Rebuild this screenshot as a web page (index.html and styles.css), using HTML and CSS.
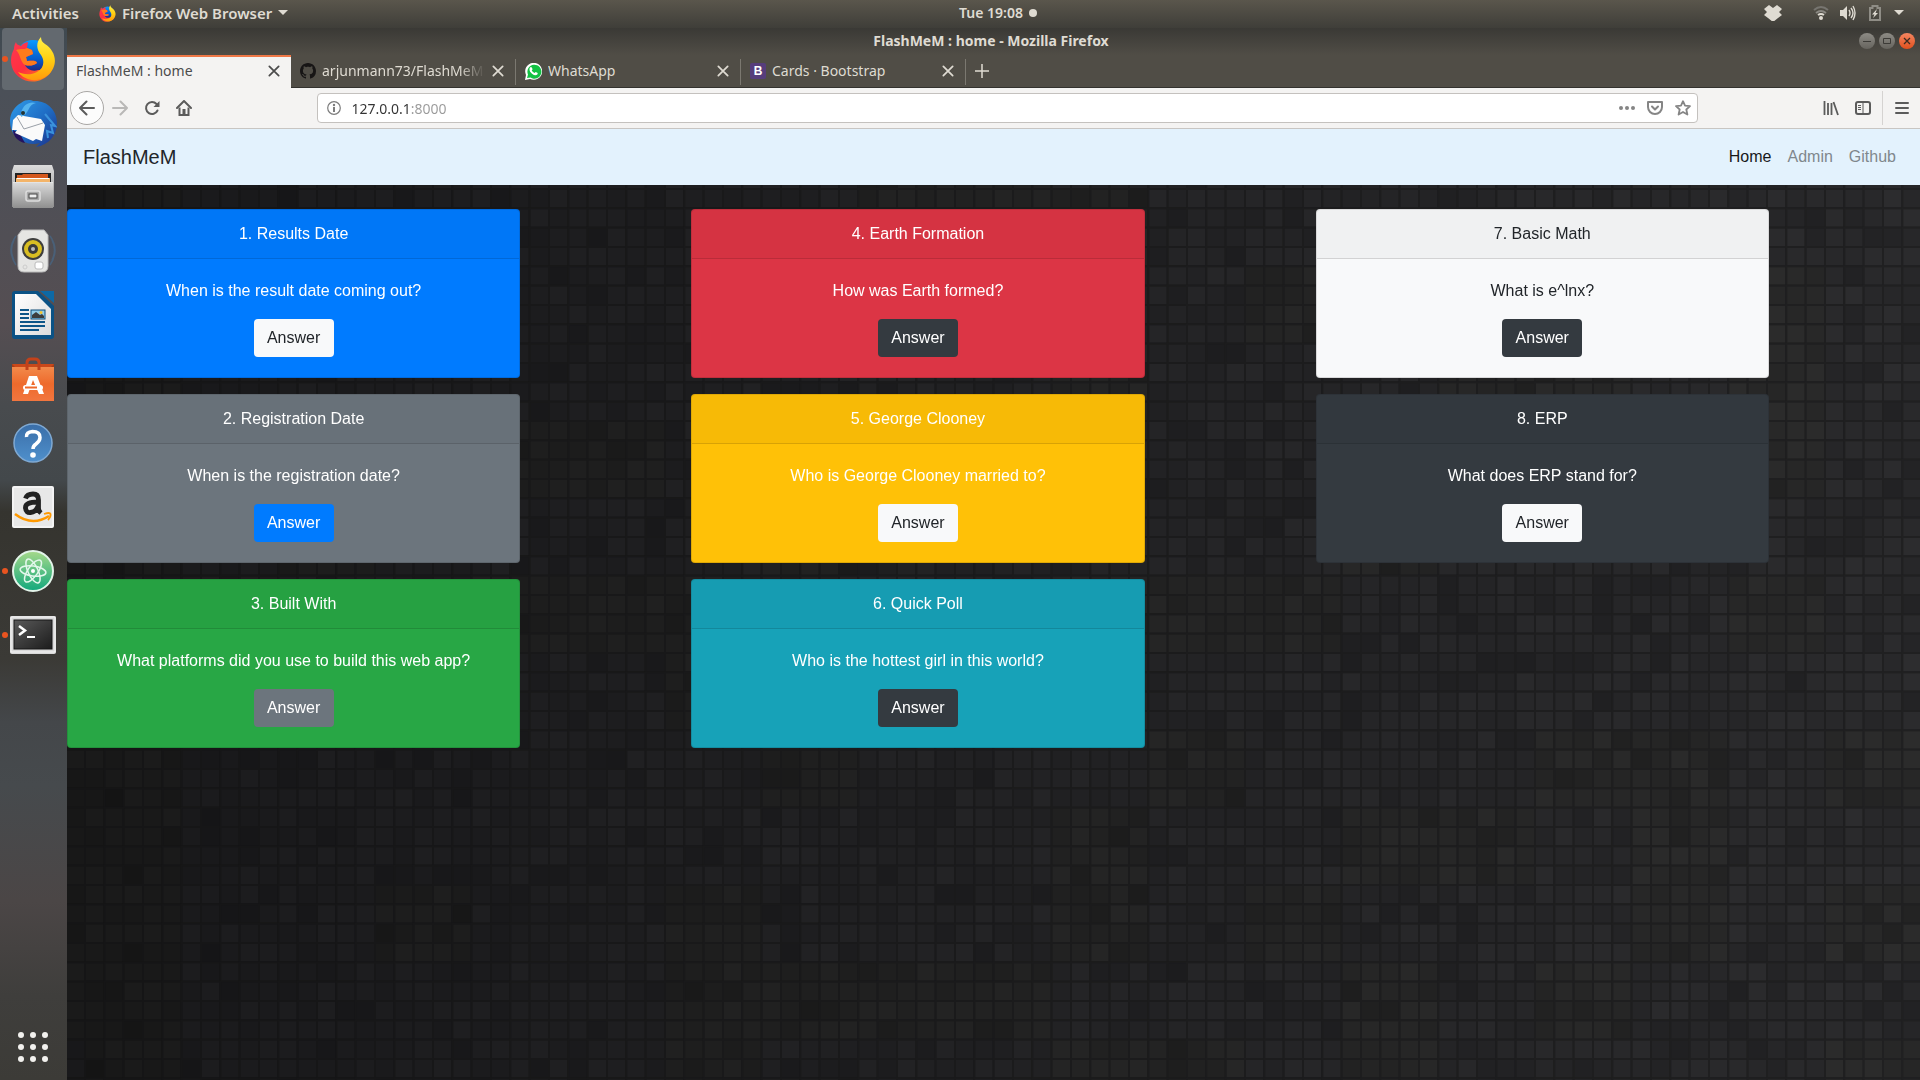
FILE: index.html
```html
<!DOCTYPE html>
<html lang="en">
<head>
<meta charset="utf-8">
<meta name="viewport" content="width=device-width, initial-scale=1">
<title>FlashMeM : home</title>
<link rel="stylesheet" href="styles.css">
</head>
<body>
<svg class="defs" aria-hidden="true">
  <defs>
    <linearGradient id="foxBody" x1="0.8" y1="0" x2="0.2" y2="1"><stop offset="0" stop-color="#ffd029"/><stop offset=".4" stop-color="#ff8a16"/><stop offset=".75" stop-color="#ff3647"/><stop offset="1" stop-color="#d3108a"/></linearGradient>
    <linearGradient id="foxLeft" x1="0" y1="0" x2="1" y2="1"><stop offset="0" stop-color="#ff3850"/><stop offset=".5" stop-color="#ff2f3f"/><stop offset="1" stop-color="#ff9a10"/></linearGradient>
    <linearGradient id="foxTail" x1="0" y1="0" x2="0" y2="1"><stop offset="0" stop-color="#fff14a"/><stop offset=".5" stop-color="#ffd012"/><stop offset="1" stop-color="#ff9a0c"/></linearGradient>
    <linearGradient id="globe" x1="0" y1="0" x2="0" y2="1"><stop offset="0" stop-color="#0a9bff"/><stop offset=".6" stop-color="#0558c8"/><stop offset="1" stop-color="#2b1a6e"/></linearGradient>
    <linearGradient id="bird" x1="0" y1="0" x2="1" y2="1"><stop offset="0" stop-color="#2f9be8"/><stop offset=".5" stop-color="#1f6ec6"/><stop offset="1" stop-color="#1b2e86"/></linearGradient>
    <linearGradient id="metal" x1="0" y1="0" x2="0" y2="1"><stop offset="0" stop-color="#dcdcdc"/><stop offset="1" stop-color="#8f8f8f"/></linearGradient>
    <linearGradient id="paper" x1="0" y1="0" x2="1" y2="1"><stop offset="0" stop-color="#fff"/><stop offset="1" stop-color="#dcdcdc"/></linearGradient>
    <linearGradient id="bag" x1="0" y1="0" x2="0" y2="1"><stop offset="0" stop-color="#f28a4b"/><stop offset=".5" stop-color="#ee6a2c"/><stop offset="1" stop-color="#f2763f"/></linearGradient>
    <linearGradient id="helpBlue" x1="0" y1="0" x2="0" y2="1"><stop offset="0" stop-color="#3a6ea8"/><stop offset="1" stop-color="#4f90cc"/></linearGradient>
    <linearGradient id="atom" x1="0" y1="0" x2="0" y2="1"><stop offset="0" stop-color="#a6d98a"/><stop offset="1" stop-color="#12a87c"/></linearGradient>
    <linearGradient id="screen" x1="0" y1="0" x2="1" y2="1"><stop offset="0" stop-color="#5a5a5a"/><stop offset="1" stop-color="#1c1c1c"/></linearGradient>
    <symbol id="firefox" viewBox="0 0 46 46">
      <circle cx="23" cy="21" r="17" fill="url(#globe)"/>
      <path d="M6 6C4 9 4 12 4 13C-1 22 0 34 9 41C19 49 34 46 41 36C43 32 40 27 36 30C33 34 31 34 28 34C22 36 17 33 15 29C19 30 23 30 27 27C26 24 22 25 17 25L16 21L23 18L22 14L17 12L18 6C14 7 12 8 11 10C8 9 6 8 6 6Z" fill="url(#foxLeft)"/>
      <path d="M6 14C11 12 14 14 17 12L22 14L23 18L16 21L17 25C22 25 26 24 27 27C23 30 19 30 15 29C10 26 11 19 6 14Z" fill="#ff7b1c"/>
      <path d="M31 1C26 6 26 13 31 19C35 25 34 32 27 36C20 40 12 38 8 36C14 44 27 48 38 39C49 29 46 15 35 8C32 6 31 4 31 1Z" fill="url(#foxTail)"/>
    </symbol>
    <symbol id="close" viewBox="0 0 12 12"><path d="M2 2l8 8M10 2l-8 8" fill="none" stroke="currentColor" stroke-width="1.5" stroke-linecap="round"/></symbol>
  </defs>
</svg>

<header class="topbar">
  <div class="topbar-left">
    <button class="shell-item" type="button">Activities</button>
    <button class="shell-item app-menu" type="button">
      <svg width="17" height="17" aria-hidden="true"><use href="#firefox"/></svg>
      Firefox Web Browser
      <svg width="10" height="6" aria-hidden="true"><path d="M0 0h10L5 5z" fill="currentColor"/></svg>
    </button>
  </div>
  <button class="shell-item clock" type="button">Tue 19:08 <span class="clock-dot"></span></button>
  <div class="topbar-right">
    <svg class="dropbox" width="18" height="16" viewBox="0 0 18 16" aria-label="Dropbox" role="img"><path d="M5 0l4 3 4-3 5 4-3 3 3 3-4 3-5 4-5-4-4-3 3-3-3-3z" fill="#dfdbd2"/></svg>
    <svg width="16" height="16" viewBox="0 0 16 16" aria-label="Wi-Fi" role="img"><g fill="none" stroke-width="2"><path d="M1 5q7-6 14 0" stroke="#777570"/><path d="M3 8q5-4 10 0" stroke="#8b8983"/><path d="M5 10q3-2 6 0" stroke="#dfdbd2"/></g><circle cx="8" cy="13" r="2" fill="#dfdbd2"/></svg>
    <svg width="16" height="16" viewBox="0 0 16 16" aria-label="Volume" role="img"><path d="M0 5h3l4-4v14l-4-4H0z" fill="#dfdbd2"/><path d="M9 5q2 3 0 6M11 3q4 5 0 10M13 1q4 7 0 14" fill="none" stroke="#dfdbd2" stroke-width="1.4"/></svg>
    <svg class="battery" width="12" height="16" viewBox="0 0 12 16" aria-label="Battery" role="img"><path d="M1 3h2.500V1h5v2H11v12H1z" fill="none" stroke="#8f8d86" stroke-width="2"/><path d="M8 4L3 9.500h2.500L4 13l5-5H6.500z" fill="#dfdbd2"/></svg>
    <svg width="10" height="6" aria-hidden="true"><path d="M0 0h10L5 5z" fill="#dfdbd2"/></svg>
  </div>
</header>

<div class="desktop">
  <nav class="dock" aria-label="Dock">
    <button class="dock-item active running" type="button" aria-label="Firefox"><svg width="46" height="46"><use href="#firefox"/></svg></button>
    <button class="dock-item" type="button" aria-label="Thunderbird">
      <svg width="48" height="48" viewBox="0 0 48 48"><path d="M12 4C17 0 22 1 24 2C38 1 48 11 48 24C48 36 40 46 27 48L31 44C25 46 18 45 14 42C8 40 1 34 1 22C1 14 6 7 12 4Z" fill="url(#bird)"/><path d="M4 31C4 38 10 43 16 44L11 35Z" fill="#24135e"/><path d="M4 21L9 16L32 20L36 26L33 42L27 40L24 42L15 38L6 34L8 31L3 31Z" fill="#fafafa"/><path d="M8 18L15 30L34 24" fill="none" stroke="#9aa0a8"/><path d="M12 14C14 5 21 2 27 4C18 6 21 15 12 18Z" fill="#54b3ef"/><circle cx="14" cy="14" r="2" fill="#233"/><path d="M36 15L46 27L42 26L44 34L38 32L39 39" fill="none" stroke="#3a92dc" stroke-width="2"/></svg>
    </button>
    <button class="dock-item" type="button" aria-label="Files">
      <svg width="44" height="46" viewBox="0 0 44 46"><path d="M3 1h38l2 6v36H1V7z" fill="url(#metal)"/><path d="M4 9h36v10H4z" fill="#222"/><path d="M6 11h5l1-1h25v9H6z" fill="#d4581d"/><path d="M5 14h34v5H5z" fill="#f3b469"/><path d="M6 14.500h32" stroke="#fff"/><path d="M2 18h40v26H2z" fill="url(#metal)"/><path d="M2 18.500h40" stroke="#e4e4e4"/><rect x="15" y="27" width="14" height="10" rx="2" fill="#aaa" stroke="#ddd" stroke-width="1.500"/><rect x="18" y="30" width="8" height="4" fill="#eee" stroke="#444"/></svg>
    </button>
    <button class="dock-item" type="button" aria-label="Rhythmbox">
      <svg width="48" height="46" viewBox="0 0 48 46"><path d="M7 8Q-3 22 7 37M5 12q-5 10 0 20M41 8q10 14 0 29M43 12q5 10 0 20" fill="none" stroke="#4a6078" stroke-width="1.500"/><path d="M13 2h22l4 5v31q0 6-6 6H15q-6 0-6-6V7z" fill="#e5e5e3" stroke="#bbb"/><circle cx="24" cy="21" r="11" fill="#3d3d3d"/><circle cx="24" cy="21" r="9" fill="#d8bd22"/><circle cx="24" cy="21" r="5" fill="#3a3a3a"/><circle cx="24" cy="21" r="2" fill="#bbb"/><rect x="26" y="34" width="8" height="7" rx="2" fill="#fff" stroke="#bbb"/><circle cx="16" cy="39" r="2" fill="none" stroke="#ccc"/></svg>
    </button>
    <button class="dock-item" type="button" aria-label="LibreOffice Writer">
      <svg width="42" height="48" viewBox="0 0 42 48"><path d="M3 0h23l16 15v30q0 3-3 3H3q-3 0-3-3V3q0-3 3-3z" fill="#0b5285"/><path d="M28 0h14v12z" fill="#0d69a5"/><path d="M3 3h21l15 15v26H3z" fill="url(#paper)"/><path d="M8 19h9M8 23h9M8 27h9M8 31h25M8 35h25M8 39h19" stroke="#0e5688" stroke-width="2"/><rect x="19" y="19" width="14" height="9" fill="#8fcbe8" stroke="#0e4d78"/><path d="M20 27v-3l4-3 4 3 2-1 2 2v2z" fill="#3c3c3c"/><circle cx="29" cy="21.500" r="1.500" fill="#f4c430"/></svg>
    </button>
    <button class="dock-item" type="button" aria-label="Ubuntu Software">
      <svg width="44" height="44" viewBox="0 0 44 44"><path d="M1 7h42l-1 4H2z" fill="#c9481a"/><path d="M1 7v4h42V7l-3 3H4z" fill="#a93c15"/><path d="M1 10h42v34H1z" fill="url(#bag)"/><path d="M16 13V6q0-4 4-4h4q4 0 4 4v7" fill="none" stroke="#c2421b" stroke-width="3"/><path d="M18 19h8l7 18h-5l-6-14-5 14h-5z" fill="#fff"/><rect x="12" y="28" width="20" height="5" rx="2.500" fill="#fff"/><path d="M14 30.500h12" stroke="#ee6a2c" stroke-width="2"/></svg>
    </button>
    <button class="dock-item" type="button" aria-label="Help">
      <svg width="42" height="42" viewBox="0 0 42 42"><circle cx="21" cy="21" r="19" fill="url(#helpBlue)" stroke="#7fa9d3" stroke-width="1.500"/><path d="M14.500 15Q14 10 20.500 9.500Q28 9.500 28 15.500Q28 19 24 22Q21 24 21 27" fill="none" stroke="#fff" stroke-width="3.500"/><circle cx="21" cy="33" r="2.800" fill="#fff"/></svg>
    </button>
    <button class="dock-item" type="button" aria-label="Amazon">
      <svg width="42" height="42" viewBox="0 0 42 42"><rect width="42" height="42" rx="2" fill="#e8e8e8"/><rect x="1" y="1" width="40" height="40" rx="1" fill="none" stroke="#fff"/><path d="M13.500 12.500Q15 8 21 8Q26.500 8 26.500 14V22Q26.500 25 29 27M26 16Q13 16 13.500 22Q14 27 18.500 26.500Q24 26 26 20" fill="none" stroke="#222" stroke-width="4.800"/><path d="M3 28Q20 41 37 30" fill="none" stroke="#f90" stroke-width="2.500"/><path d="M32 28Q38 26 38.500 28Q39 31 36 34" fill="none" stroke="#f90" stroke-width="1.800"/></svg>
    </button>
    <button class="dock-item running" type="button" aria-label="Atom">
      <svg width="42" height="42" viewBox="0 0 42 42"><circle cx="21" cy="21" r="20" fill="url(#atom)" stroke="#e3f4ea" stroke-width="2"/><g fill="none" stroke="#e3f7ec" stroke-width="1.500"><ellipse cx="21" cy="21" rx="13" ry="5" transform="rotate(8 21 21)"/><ellipse cx="21" cy="21" rx="13" ry="5" transform="rotate(65 21 21)"/><ellipse cx="21" cy="21" rx="13" ry="5" transform="rotate(125 21 21)"/></g><circle cx="21" cy="21" r="2" fill="#fff"/></svg>
    </button>
    <button class="dock-item running" type="button" aria-label="Terminal">
      <svg width="46" height="38" viewBox="0 0 46 38"><rect width="46" height="38" rx="2" fill="#d9d9d9"/><rect x="1" y="1" width="44" height="35" fill="none" stroke="#f4f4f4"/><rect x="4" y="4" width="38" height="29" fill="url(#screen)" stroke="#161616"/><path d="M9 10l6 4.500L9 19" fill="none" stroke="#fff" stroke-width="2.500"/><path d="M17 21h8" stroke="#fff" stroke-width="2"/></svg>
    </button>
    <button class="dock-item apps" type="button" aria-label="Show applications">
      <svg width="30" height="30" viewBox="0 0 30 30" fill="#f2f1ee"><circle cx="3" cy="3" r="3"/><circle cx="15" cy="3" r="3"/><circle cx="27" cy="3" r="3"/><circle cx="3" cy="15" r="3"/><circle cx="15" cy="15" r="3"/><circle cx="27" cy="15" r="3"/><circle cx="3" cy="27" r="3"/><circle cx="15" cy="27" r="3"/><circle cx="27" cy="27" r="3"/></svg>
    </button>
  </nav>

  <div class="window">
    <div class="titlebar">
      <span class="window-title">FlashMeM : home - Mozilla Firefox</span>
      <div class="window-controls">
        <button class="wc" type="button" aria-label="Minimize"><svg width="16" height="16"><path d="M4 8.500h8" stroke="#3c3b37"/></svg></button>
        <button class="wc" type="button" aria-label="Maximize"><svg width="16" height="16"><path d="M4.500 5.500h7v5h-7z" fill="none" stroke="#3c3b37"/></svg></button>
        <button class="wc wc-close" type="button" aria-label="Close"><svg width="16" height="16"><path d="M5 5l6 6M11 5l-6 6" stroke="#3c2b20" stroke-width="1.300"/></svg></button>
      </div>
    </div>

    <div class="tabs">
      <div class="tab selected">
        <span class="tab-label">FlashMeM : home</span>
        <button class="icon-btn" type="button" aria-label="Close tab"><svg width="14" height="14"><use href="#close"/></svg></button>
      </div>
      <div class="tab">
        <svg width="16" height="16" viewBox="0 0 16 16" aria-hidden="true"><path fill="#171515" d="M8 0C3.580 0 0 3.580 0 8c0 3.540 2.290 6.530 5.470 7.590.4.070.55-.17.55-.38 0-.19-.01-.82-.01-1.490-2.010.37-2.530-.49-2.690-.94-.09-.23-.48-.94-.82-1.130-.28-.15-.68-.52-.01-.53.63-.01 1.080.58 1.230.82.72 1.210 1.870.87 2.330.66.070-.52.28-.87.51-1.070-1.780-.2-3.640-.89-3.640-3.950 0-.87.31-1.590.82-2.150-.08-.2-.36-1.020.08-2.120 0 0 .67-.21 2.200.82.64-.18 1.320-.27 2-.27s1.360.09 2 .27c1.530-1.040 2.200-.82 2.200-.82.44 1.100.16 1.920.08 2.120.51.56.82 1.270.82 2.150 0 3.070-1.870 3.750-3.650 3.950.29.25.54.73.54 1.480 0 1.070-.01 1.930-.01 2.200 0 .21.15.46.55.38A8.010 8.010 0 0 0 16 8c0-4.420-3.580-8-8-8z"/></svg>
        <span class="tab-label fade">arjunmann73/FlashMeM: A</span>
        <button class="icon-btn" type="button" aria-label="Close tab"><svg width="14" height="14"><use href="#close"/></svg></button>
      </div>
      <div class="tab">
        <svg width="17" height="17" viewBox="0 0 17 17" aria-hidden="true"><path d="M0 17l1-5A8.500 8.500 0 1 1 5 16z" fill="#fff"/><path d="M2 15l1-3.500A7 7 0 1 1 5.500 14.500z" fill="#12c143"/><path d="M5 4.500q1-1 1.800 0l.8 1.800-.9 1.200q1 1.900 2.900 2.600l1.100-1.200 2 1q.3 1.500-1.200 2.200-2 .6-4.500-1.400T4.500 7q-.3-1.500.5-2.500z" fill="#fff"/></svg>
        <span class="tab-label">WhatsApp</span>
        <button class="icon-btn" type="button" aria-label="Close tab"><svg width="14" height="14"><use href="#close"/></svg></button>
      </div>
      <div class="tab">
        <span class="bs-icon" aria-hidden="true">B</span>
        <span class="tab-label">Cards · Bootstrap</span>
        <button class="icon-btn" type="button" aria-label="Close tab"><svg width="14" height="14"><use href="#close"/></svg></button>
      </div>
      <button class="icon-btn new-tab" type="button" aria-label="New tab"><svg width="14" height="14"><path d="M7 0v14M0 7h14" stroke="currentColor" stroke-width="1.500"/></svg></button>
    </div>

    <div class="toolbar">
      <div class="tool-group">
        <button class="tool back" type="button" aria-label="Back"><svg width="16" height="16"><path d="M15 8H1M7.500 1.500L1 8l6.500 6.500" fill="none" stroke="currentColor" stroke-width="2" stroke-linecap="round" stroke-linejoin="round"/></svg></button>
        <button class="tool forward" type="button" aria-label="Forward" disabled><svg width="16" height="16"><path d="M1 8h14M8.500 1.500L15 8l-6.500 6.500" fill="none" stroke="currentColor" stroke-width="2" stroke-linecap="round" stroke-linejoin="round"/></svg></button>
        <button class="tool" type="button" aria-label="Reload"><svg width="16" height="16"><path d="M13.500 10.500A6 6 0 1 1 12.500 4" fill="none" stroke="currentColor" stroke-width="2" stroke-linecap="round"/><path d="M15.500 1v6h-6z" fill="currentColor"/></svg></button>
        <button class="tool" type="button" aria-label="Home"><svg width="16" height="16"><path d="M1 8l7-7 7 7" fill="none" stroke="currentColor" stroke-width="2" stroke-linecap="round" stroke-linejoin="round"/><path d="M3.500 7.500V15h9V7.500" fill="none" stroke="currentColor" stroke-width="2"/><path d="M6.500 9h3v6h-3z" fill="currentColor"/></svg></button>
      </div>
      <div class="spacer"></div>
      <div class="urlbar">
        <svg width="14" height="14" aria-hidden="true"><circle cx="7" cy="7" r="6.300" fill="none" stroke="#7c7c7c" stroke-width="1.200"/><path d="M7 6v5" stroke="#7c7c7c" stroke-width="2"/><circle cx="7" cy="4" r="1.200" fill="#7c7c7c"/></svg>
        <input class="url" type="text" value="127.0.0.1:8000" aria-label="Address">
        <button class="icon-btn" type="button" aria-label="Page actions"><svg width="16" height="16" fill="currentColor"><circle cx="2" cy="8" r="2"/><circle cx="8" cy="8" r="2"/><circle cx="14" cy="8" r="2"/></svg></button>
        <button class="icon-btn" type="button" aria-label="Save to Pocket"><svg width="16" height="16" fill="none" stroke="currentColor" stroke-width="2" stroke-linecap="round" stroke-linejoin="round"><path d="M1 2h14v5a7 7 0 0 1-14 0z"/><path d="M5 6.500l3 3 3-3"/></svg></button>
        <button class="icon-btn" type="button" aria-label="Bookmark"><svg width="16" height="16"><path d="M8 1.200l2 4.500 5 .5-3.700 3.300 1.100 5L8 12l-4.400 2.500 1.100-5L1 6.200l5-.5z" fill="none" stroke="currentColor" stroke-width="1.800" stroke-linejoin="round"/></svg></button>
      </div>
      <div class="spacer"></div>
      <div class="tool-group">
        <button class="tool" type="button" aria-label="Library"><svg width="16" height="16"><path d="M1.500 1v14M5 3v12M8.500 3v12M10.500 2l4.500 13" fill="none" stroke="currentColor" stroke-width="1.800"/></svg></button>
        <button class="tool" type="button" aria-label="Sidebars"><svg width="16" height="16" fill="none" stroke="currentColor"><rect x="1" y="2" width="14" height="12" rx="2" stroke-width="2"/><path d="M8 2v12M3 5.500h3M3 7.500h3M3 9.500h3"/></svg></button>
        <button class="tool menu" type="button" aria-label="Menu"><svg width="14" height="14"><path d="M1 2h12M1 7h12M1 12h12" stroke="currentColor" stroke-width="2" stroke-linecap="round"/></svg></button>
      </div>
    </div>

    <div class="page">
      <nav class="navbar">
        <a class="brand" href="#">FlashMeM</a>
        <div class="nav-links">
          <a class="nav-link current" href="#">Home</a>
          <a class="nav-link" href="#">Admin</a>
          <a class="nav-link" href="#">Github</a>
        </div>
      </nav>
      <main class="content">
        <canvas class="mosaic" id="mosaic" aria-hidden="true"></canvas>
        <div class="cards">
          <section class="card primary"><h2 class="card-header">1. Results Date</h2><div class="card-body"><p class="card-text">When is the result date coming out?</p><button class="btn btn-light" type="button">Answer</button></div></section>
          <section class="card secondary"><h2 class="card-header">2. Registration Date</h2><div class="card-body"><p class="card-text">When is the registration date?</p><button class="btn btn-primary" type="button">Answer</button></div></section>
          <section class="card success"><h2 class="card-header">3. Built With</h2><div class="card-body"><p class="card-text">What platforms did you use to build this web app?</p><button class="btn btn-secondary" type="button">Answer</button></div></section>
          <section class="card danger"><h2 class="card-header">4. Earth Formation</h2><div class="card-body"><p class="card-text">How was Earth formed?</p><button class="btn btn-dark" type="button">Answer</button></div></section>
          <section class="card warning"><h2 class="card-header">5. George Clooney</h2><div class="card-body"><p class="card-text">Who is George Clooney married to?</p><button class="btn btn-light" type="button">Answer</button></div></section>
          <section class="card info"><h2 class="card-header">6. Quick Poll</h2><div class="card-body"><p class="card-text">Who is the hottest girl in this world?</p><button class="btn btn-dark" type="button">Answer</button></div></section>
          <section class="card light"><h2 class="card-header">7. Basic Math</h2><div class="card-body"><p class="card-text">What is e^lnx?</p><button class="btn btn-dark" type="button">Answer</button></div></section>
          <section class="card dark"><h2 class="card-header">8. ERP</h2><div class="card-body"><p class="card-text">What does ERP stand for?</p><button class="btn btn-light" type="button">Answer</button></div></section>
        </div>
      </main>
    </div>
  </div>
</div>
<script src="mosaic.js"></script>
</body>
</html>
```
FILE: styles.css
```css
* { box-sizing: border-box; }
html, body { height: 100%; }
body {
  margin: 0;
  display: flex;
  flex-direction: column;
  min-height: 100vh;
  background: #161618;
  font-family: "Noto Sans", "Open Sans", sans-serif;
  font-size: 14px;
}
button { font: inherit; border: 0; background: none; padding: 0; color: inherit; }
svg { display: block; flex: none; }
.defs { position: absolute; width: 0; height: 0; }

/* GNOME top bar */
.topbar {
  display: grid;
  grid-template-columns: 1fr auto 1fr;
  align-items: center;
  height: 28px;
  padding: 0 16px 2px 12px;
  background: linear-gradient(#5a564c, #3f3e39);
  color: #dfdbd2;
  font-size: 15px;
  font-weight: 600;
}
.topbar-left, .topbar-right, .shell-item { display: flex; align-items: center; }
.topbar-left { gap: 20px; }
.topbar-right { justify-content: flex-end; gap: 11px; }
.shell-item { gap: 6px; line-height: 26px; white-space: nowrap; }
.clock { margin-left: 80px; font-size: 14px; }
.clock-dot { width: 8px; height: 8px; border-radius: 50%; background: #dfdbd2; }
.dropbox { margin-right: 20px; }
.battery { margin: 0 2px; }

.desktop { display: flex; flex: 1; min-height: 0; }

/* Dock */
.dock {
  display: flex;
  flex-direction: column;
  width: 67px;
  flex: none;
  background: linear-gradient(#3f4950 0, #4b5058 6%, #514f55 20%, #554e52 28%, #484b4e 36%, #43484b 43%, #35342f 46%, #3b3a36 60%, #44474a 66%, #464a4d 72%, #4b4646 83%, #3f3e3c 92%, #3c3b37 100%);
}
.dock-item {
  position: relative;
  display: flex;
  align-items: center;
  justify-content: center;
  height: 62px;
  margin: 0 3px 2px 2px;
  border-radius: 4px;
}
.dock-item.active { background: #63696f; }
.dock-item.running::before {
  content: "";
  position: absolute;
  left: 0;
  width: 6px;
  height: 6px;
  border-radius: 50%;
  background: #e95420;
}
.dock-item.apps { margin-top: auto; }

/* Browser chrome */
.window { display: flex; flex-direction: column; flex: 1; min-width: 0; }
.titlebar {
  display: grid;
  grid-template-columns: 1fr auto 1fr;
  align-items: center;
  height: 27px;
  padding: 0 5px 2px 0;
  background: linear-gradient(#3a3935, #504d46);
  color: #dfdbd2;
  font-weight: 700;
}
.window-title { grid-column: 2; line-height: 24px; }
.window-controls { display: flex; justify-content: flex-end; gap: 4px; }
.wc { width: 16px; height: 16px; border-radius: 50%; background: linear-gradient(#8d8b85, #66645e); }
.wc-close { background: linear-gradient(#f58661, #e0501d); }

.tabs {
  display: flex;
  height: 33px;
  background: #504d46;
  color: #dfdbd2;
  border-bottom: 1px solid #33322e;
}
.tab {
  display: flex;
  align-items: center;
  gap: 6px;
  width: 225px;
  padding: 0 10px 0 9px;
  border-right: 1px solid transparent;
  border-image: linear-gradient(transparent 5px, #7b7870 5px, #7b7870 29px, transparent 29px) 1;
}
.tab.selected {
  width: 224px;
  height: 33px;
  padding-bottom: 3px;
  border: 0;
  border-top: 2px solid #ef7847;
  background: #f4f3f2;
  color: #4c4c4c;
}
.tab-label { flex: 1; min-width: 0; overflow: hidden; white-space: nowrap; line-height: 24px; }
.fade { -webkit-mask-image: linear-gradient(90deg, #000 84%, transparent 100%); mask-image: linear-gradient(90deg, #000 84%, transparent 100%); }
.icon-btn { display: flex; align-items: center; justify-content: center; }
.new-tab { width: 32px; }
.bs-icon {
  width: 16px;
  height: 16px;
  border-radius: 2px;
  background: #563d7c;
  color: #fff;
  font: bold 12px/16px "Liberation Sans", sans-serif;
  text-align: center;
}

.toolbar {
  display: flex;
  align-items: center;
  height: 41px;
  padding: 0 0 0 3px;
  background: #f4f3f2;
  border-bottom: 1px solid #c8c5c2;
  color: #5b5b5b;
}
.tool-group { display: flex; align-items: center; }
.tool { display: flex; align-items: center; justify-content: center; width: 32px; height: 34px; }
.tool.back { width: 34px; border: 1px solid #a9a7a5; border-radius: 50%; background: #fcfcfc; }
.tool.forward { color: #b9b8b7; }
.tool.menu { width: 38px; margin-left: 3px; border-left: 1px solid #d5d3d1; }
.spacer { flex: 1 0 20px; }
.urlbar {
  display: flex;
  align-items: center;
  gap: 12px;
  flex: 14 1 0;
  height: 30px;
  padding: 0 6px 0 9px;
  border: 1px solid #c4c1be;
  border-radius: 4px;
  background: #fff;
  color: #858585;
}
.url {
  flex: 1;
  min-width: 0;
  padding: 0;
  margin-left: -2px;
  border: 0;
  outline: 0;
  font: inherit;
  color: transparent;
  background: linear-gradient(90deg, #333 60px, #999 60px) text;
}

/* FlashMeM page */
.page { display: flex; flex-direction: column; flex: 1; font-family: "Liberation Sans", Arial, sans-serif; font-size: 16px; line-height: 24px; }
.navbar { display: flex; align-items: center; justify-content: space-between; padding: 8px 16px; background: #e3f2fd; }
.navbar a { text-decoration: none; }
.brand { font-size: 20px; line-height: 30px; color: #212529; }
.nav-links { display: flex; }
.nav-link { padding: 8px; color: #7f878c; }
.nav-link.current { color: #17181a; }

.content { position: relative; flex: 1; padding: 24px 0; background: #1b1b1c; overflow: hidden; }
.mosaic { position: absolute; inset: 0; width: 100%; height: 100%; }
.cards {
  position: relative;
  display: grid;
  grid-template-columns: repeat(3, 1fr);
  grid-template-rows: repeat(3, auto);
  grid-auto-flow: column;
  gap: 16px 20px;
}
.card { width: 75%; border: 1px solid rgba(0, 0, 0, .125); border-radius: 4px; color: #fff; text-align: center; }
.card-header { margin: 0; padding: 12px 20px; background: rgba(0, 0, 0, .03); border-bottom: 1px solid rgba(0, 0, 0, .125); font-size: 16px; font-weight: 400; }
.card-body { padding: 20px; }
.card-text { margin: 0 0 16px; }
.primary { background: #007bff; }
.secondary { background: #6c757d; }
.success { background: #28a745; }
.danger { background: #dc3545; }
.warning { background: #ffc107; }
.info { background: #17a2b8; }
.light { background: #f8f9fa; color: #212529; }
.dark { background: #343a40; }
.btn { min-width: 80px; height: 38px; padding: 0 12px; border-radius: 4px; color: #fff; }
.btn-light { background: #f8f9fa; color: #212529; }
.btn-dark { background: #343a40; }
.btn-primary { background: #007bff; }
.btn-secondary { background: #6c757d; }
```
FILE: mosaic.js
```js
// Paints the dark tiled wallpaper: darker on the left, lighter to the right.
(function () {
  var canvas = document.getElementById('mosaic');
  var pitch = 58 / 3;

  function noise(a, b) {
    var n = Math.sin(a * 127.1 + b * 311.7) * 43758.5453;
    return n - Math.floor(n);
  }

  function paint() {
    var w = canvas.width = canvas.clientWidth;
    var h = canvas.height = canvas.clientHeight;
    var g = canvas.getContext('2d');
    for (var r = -1; r * pitch < h; r++) {
      for (var c = -1; c * pitch < w; c++) {
        var t = Math.max(0, Math.min(1, c * pitch / w));
        var level = 25 + t * 17;
        var x = c * pitch + 19;
        var y = r * pitch + 5;
        var gap = level - 4 - t * 6;
        g.fillStyle = 'rgb(' + [gap, gap, gap + 1].map(Math.round) + ')';
        g.fillRect(x - 2, y - 2, pitch + 1, pitch + 1);
        var v = level + (noise(c, r) - 0.5) * 5 * (0.7 + t * 0.5);
        if (noise(r + 9, c) < 0.2) v -= 3 + t * 2;
        var blue = noise(Math.floor(c / 5), Math.floor(r / 4)) > 0.3 ? 2 : 0;
        g.fillStyle = 'rgb(' + [v, v, v + blue].map(Math.round) + ')';
        g.fillRect(x, y, pitch - 2, pitch - 2);
      }
    }
  }

  paint();
  window.addEventListener('resize', paint);
})();
```
